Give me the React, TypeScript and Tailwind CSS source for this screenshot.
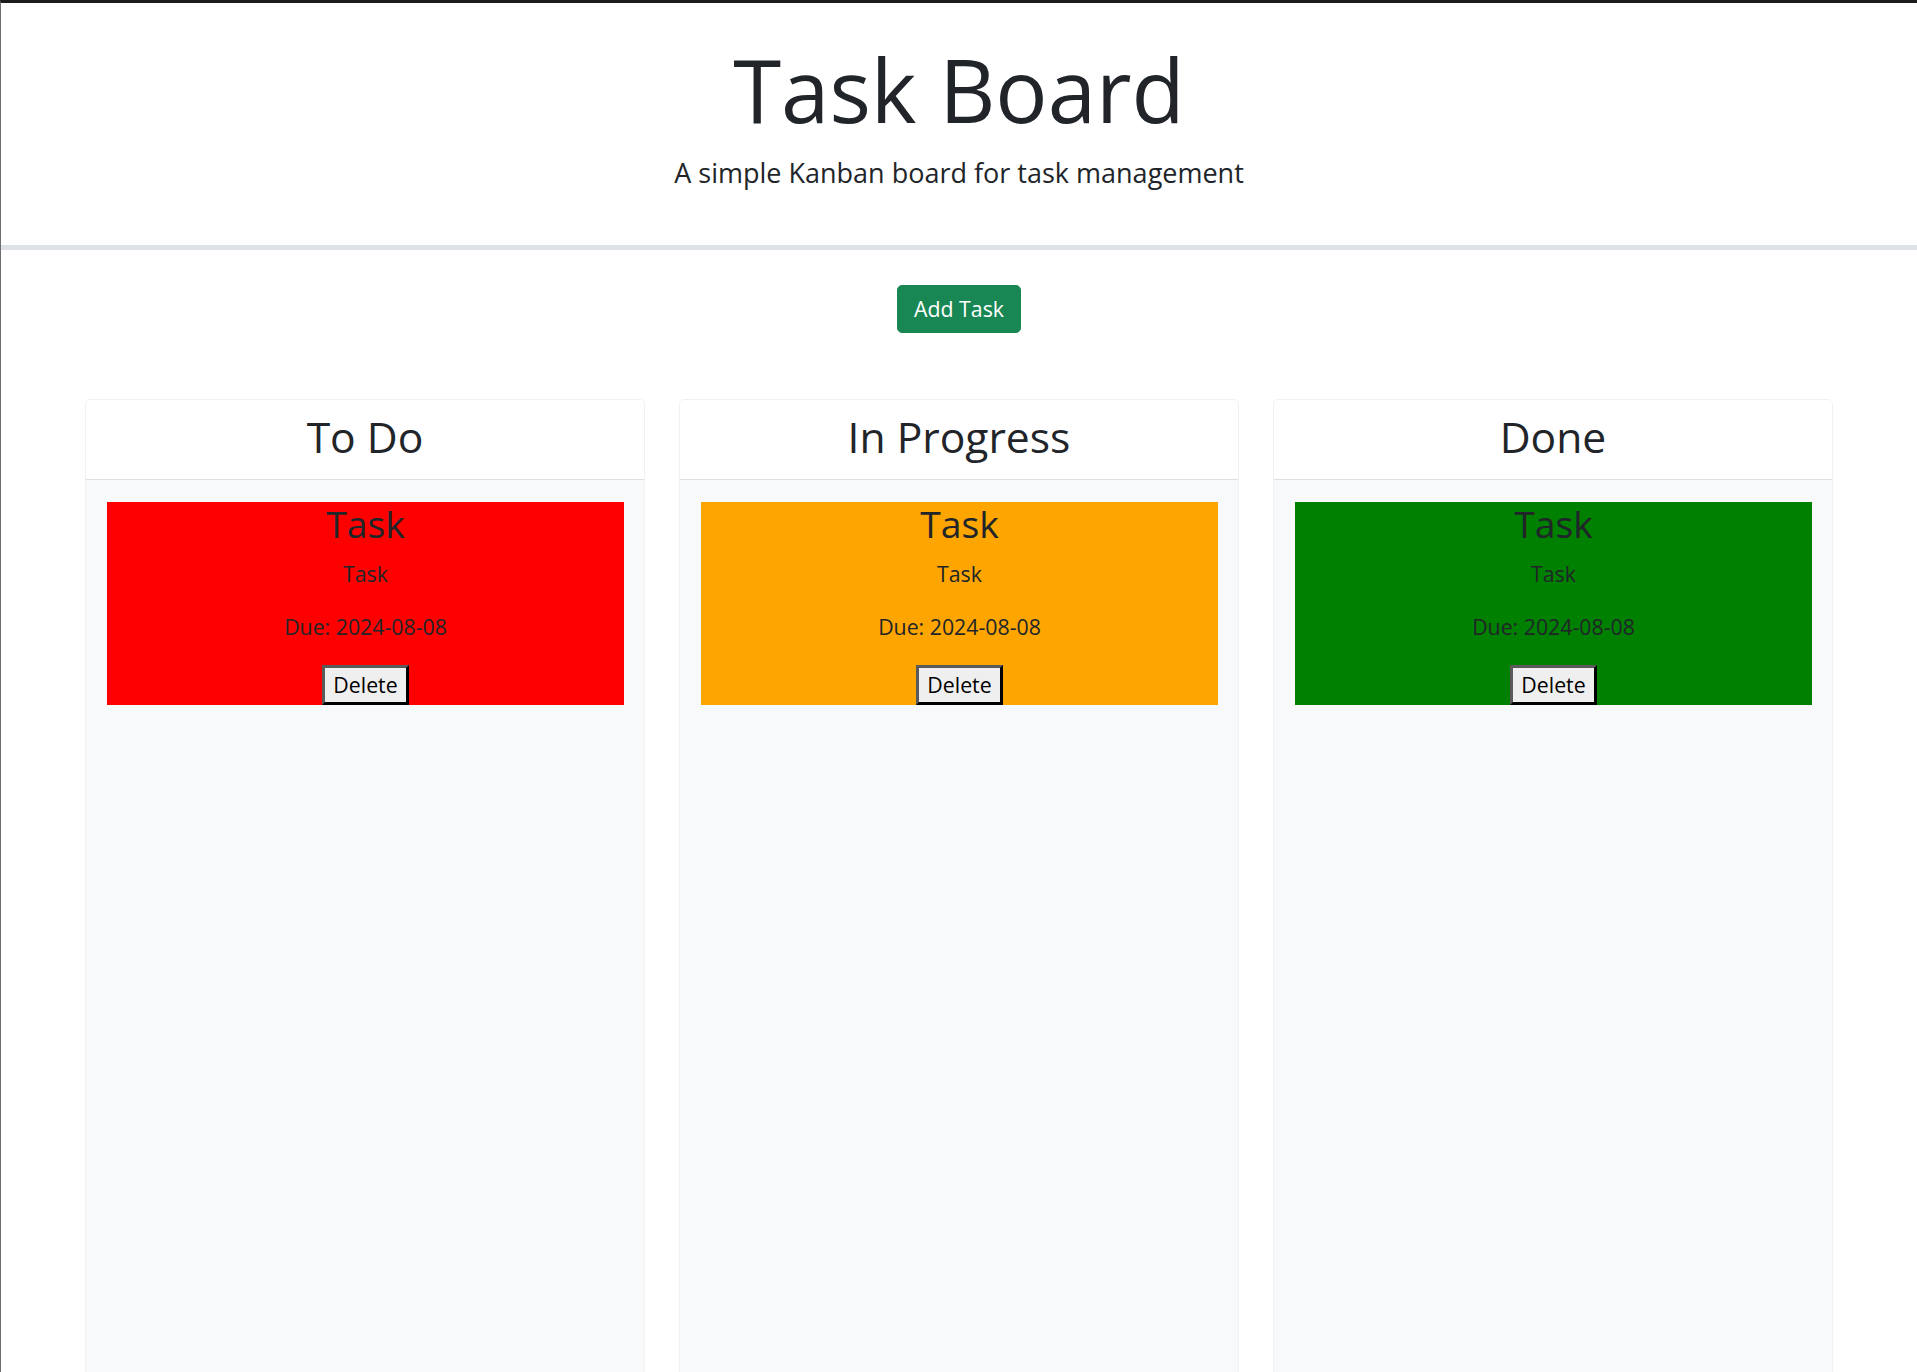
import React from "react";

type Task = { id: number; title: string; description: string; due: string };

const columns = [
  { title: "To Do", color: "bg-[#ff0000]" },
  { title: "In Progress", color: "bg-[#ffa500]" },
  { title: "Done", color: "bg-[#008000]" },
];

const task: Task = { id: 1, title: "Task", description: "Task", due: "2024-08-08" };

const TaskCard: React.FC<{ task: Task; color: string }> = ({ task, color }) => (
  <div className={`${color} text-center`}>
    <h3 className="text-[37.3px] leading-[1.2] font-normal mb-[11.5px]">{task.title}</h3>
    <p className="mb-[21.3px]">{task.description}</p>
    <p className="mb-[22px]">Due: {task.due}</p>
    <div className="flex justify-center">
      <button className="text-[21.3px] leading-normal text-black bg-[#efefef] px-[8px] py-[1px] border-[3px] border-t-[#5a5a5a] border-l-[#5a5a5a] border-r-black border-b-black">
        Delete
      </button>
    </div>
  </div>
);

const App: React.FC = () => {
  return (
    <div className="min-h-screen bg-white border-t-[3px] border-t-[#1c1c1c] border-l border-l-[#6e6e6e] font-['Open_Sans',sans-serif] text-[21.3px] leading-[1.5] text-[#212529] overflow-hidden">
      {/* Header */}
      <header className="text-center pt-[34px] pb-[51px] border-b-[5px] border-[#dee2e6]">
        <h1 className="text-[87px] leading-[1.2] font-normal mb-[12px]">Task Board</h1>
        <p className="text-[27px] leading-[1.5] font-normal">A simple Kanban board for task management</p>
      </header>

      <div className="flex justify-center mt-[35px]">
        <button className="bg-[#198754] border border-[#198754] text-white rounded-[5px] px-[16px] py-[7px] text-[21.3px] leading-[1.5]">
          Add Task
        </button>
      </div>

      {/* Board */}
      <div className="grid grid-cols-3 gap-[34px] pl-[84px] pr-[84px] mt-[66px]">
        {columns.map((col) => (
          <div key={col.title} className="border border-[#f1f1f1] rounded-[5px] overflow-hidden">
            <div className="bg-white text-center pt-[11px] pb-[17px] border-b border-[#dfdfdf]">
              <h2 className="text-[42.6px] leading-[51px] font-normal">{col.title}</h2>
            </div>
            <div className="bg-[#f8f9fa] min-h-[1000px] pt-[22px] pl-[21px] pr-[20px]">
              <TaskCard task={task} color={col.color} />
            </div>
          </div>
        ))}
      </div>
    </div>
  );
};

export default App;
